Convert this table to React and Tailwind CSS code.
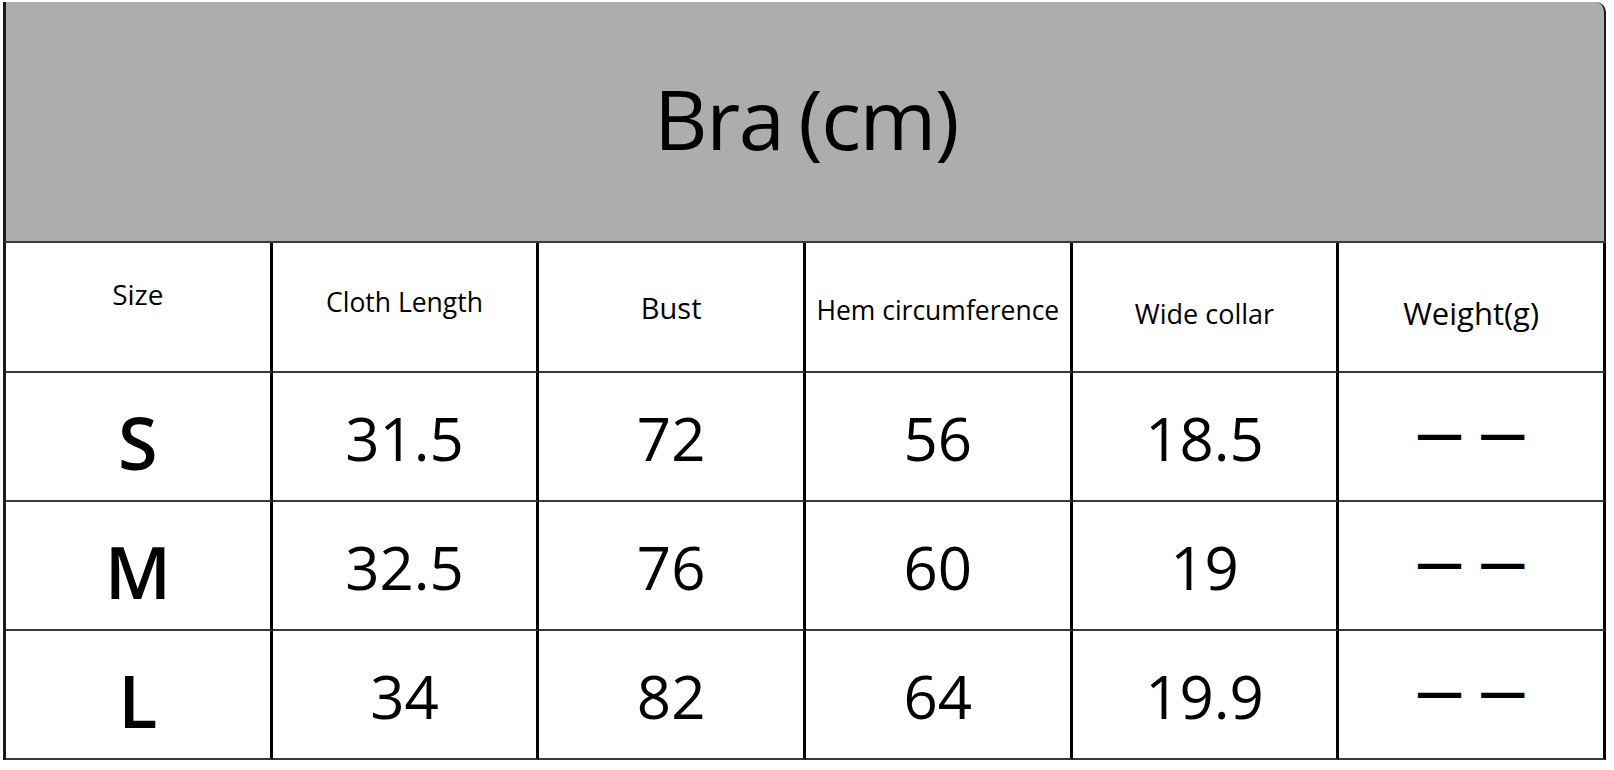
import React from "react";

const headers = [
    { label: "Size", cls: "text-[28px] pb-[26px]" },
    { label: "Cloth Length", cls: "text-[26.5px] pb-[10px]" },
    { label: "Bust", cls: "text-[29px] pt-[0px]" },
    { label: "Hem circumference", cls: "text-[26.5px] pt-[6px]" },
    { label: "Wide collar", cls: "text-[27px] pt-[12px]" },
    { label: "Weight(g)", cls: "text-[31px] pt-[12px]" },
];

const rows = [
    ["S", "31.5", "72", "56", "18.5"],
    ["M", "32.5", "76", "60", "19"],
    ["L", "34", "82", "64", "19.9"],
];

export default function App() {
    return (
        <div className="w-[1614px] h-[770px] bg-white" style={{ fontFamily: '"Open Sans", "Noto Sans", sans-serif' }}>
            <div className="ml-[3px] pt-[2px] w-[1603px]">
                {/* title band */}
                <div className="h-[239px] bg-[#adadad] border-l-[3px] border-r-[2px] border-[#1c1c1c] rounded-tr-[10px] flex items-center justify-center pb-[8px]">
                    <h1 className="text-[83px] leading-none text-black tracking-[-1.5px] [word-spacing:-5px] pl-[2px]">Bra (cm)</h1>
                </div>

                <div className="grid grid-cols-6 border-l-[3px] border-t-[2px] border-[#1c1c1c] border-t-[#3a3a3a]">
                    {headers.map((h) => (
                        <div
                            key={h.label}
                            className={`h-[130px] border-r-[3px] border-b-[2px] border-r-black border-b-[#3a3a3a] flex items-center justify-center leading-none text-black ${h.cls}`}
                        >
                            {h.label}
                        </div>
                    ))}

                    {rows.map((row) => (
                        <React.Fragment key={row[0]}>
                            <div className="h-[129px] border-r-[3px] border-b-[2px] border-r-black border-b-[#3a3a3a] flex items-center justify-center pt-[10px] text-[72px] leading-none font-semibold text-black">
                                {row[0]}
                            </div>
                            {row.slice(1).map((v, i) => (
                                <div
                                    key={i}
                                    className="h-[129px] border-r-[3px] border-b-[2px] border-r-black border-b-[#3a3a3a] flex items-center justify-center pt-[2px] text-[60px] leading-none font-medium text-black"
                                >
                                    {v}
                                </div>
                            ))}
                            <div className="h-[129px] border-r-[3px] border-b-[2px] border-r-black border-b-[#3a3a3a] flex items-center justify-center pb-[8px] text-[47px] leading-none font-bold text-black [word-spacing:4px]">
                                — —
                            </div>
                        </React.Fragment>
                    ))}
                </div>
            </div>
        </div>
    );
}
